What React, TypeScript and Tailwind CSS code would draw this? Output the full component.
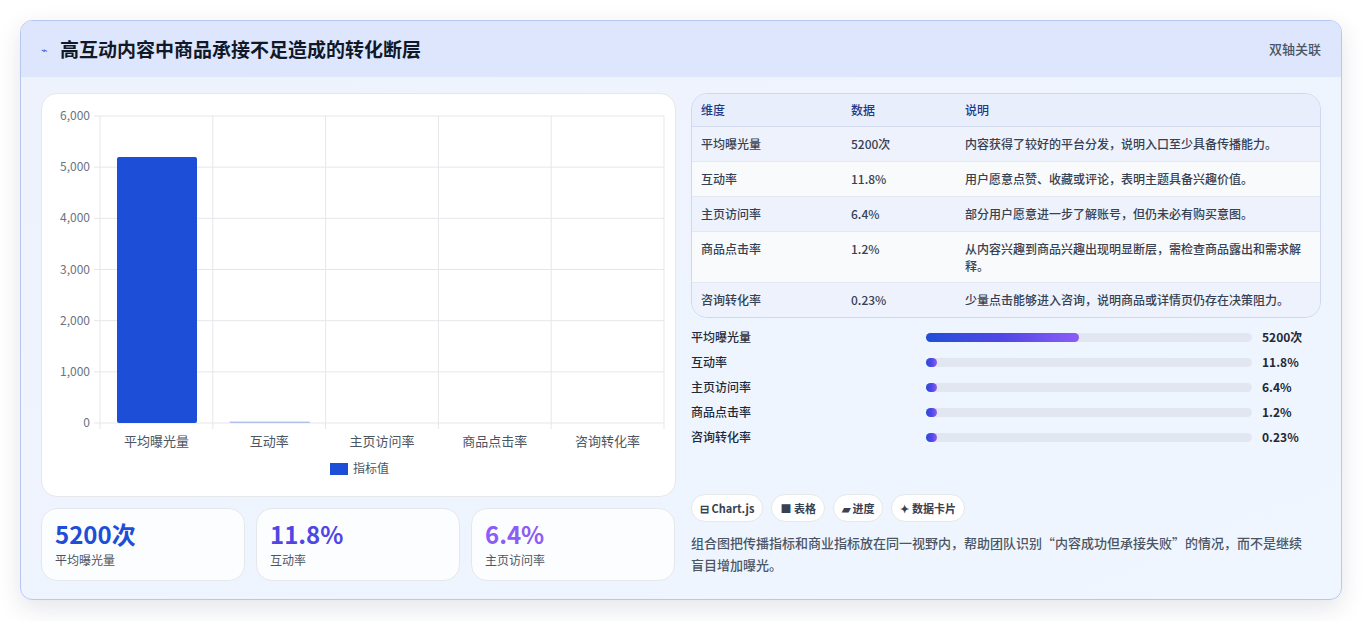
import React from "react";

const rows = [
  ["平均曝光量", "5200次", "内容获得了较好的平台分发，说明入口至少具备传播能力。"],
  ["互动率", "11.8%", "用户愿意点赞、收藏或评论，表明主题具备兴趣价值。"],
  ["主页访问率", "6.4%", "部分用户愿意进一步了解账号，但仍未必有购买意图。"],
  ["商品点击率", "1.2%", "从内容兴趣到商品兴趣出现明显断层，需检查商品露出和需求解释。"],
  ["咨询转化率", "0.23%", "少量点击能够进入咨询，说明商品或详情页仍存在决策阻力。"],
];
const bars: [string, string, number][] = [
  ["平均曝光量", "5200次", 47],
  ["互动率", "11.8%", 3.5],
  ["主页访问率", "6.4%", 3.5],
  ["商品点击率", "1.2%", 3.5],
  ["咨询转化率", "0.23%", 3.5],
];

function Chart() {
  const x0 = 58, x1 = 622, y0 = 22, y1 = 329;
  const cw = (x1 - x0) / 5;
  const cats = ["平均曝光量", "互动率", "主页访问率", "商品点击率", "咨询转化率"];
  return (
    <svg width="635" height="403" className="block">
      {[0, 1, 2, 3, 4, 5, 6].map((i) => {
        const y = y1 - (i * (y1 - y0)) / 6;
        return (
          <g key={i}>
            <line x1={x0 - 6} x2={x1} y1={y} y2={y} stroke="#e5e7eb" />
            <text x={x0 - 10} y={y + 4} textAnchor="end" fontSize="12" fill="#6b7280">
              {i === 0 ? "0" : `${i},000`}
            </text>
          </g>
        );
      })}
      {[0, 1, 2, 3, 4, 5].map((i) => (
        <line key={i} x1={x0 + i * cw} x2={x0 + i * cw} y1={y0} y2={y1 + 6} stroke="#e5e7eb" />
      ))}
      <rect x={x0 + 17} y={y1 - 5200 * (y1 - y0) / 6000} width={80} height={5200 * (y1 - y0) / 6000} fill="#1d4ed8" rx="2" />
      <rect x={x0 + cw + 17} y={y1 - 1.5} width={80} height={1.5} fill="#1d4ed8" opacity="0.3" />
      {cats.map((c, i) => (
        <text key={c} x={x0 + cw * i + cw / 2} y={y1 + 23} textAnchor="middle" fontSize="13" fill="#4b5563">{c}</text>
      ))}
      <rect x={288} y={369} width={18} height={12} fill="#1d4ed8" />
      <text x={311} y={379} fontSize="12" fill="#4b5563">指标值</text>
    </svg>
  );
}

export default function App() {
  return (
    <div className="min-h-[621px] bg-white pt-5 px-5" style={{ fontFamily: '"Noto Sans CJK SC", "Noto Sans", sans-serif' }}>
      <div className="w-[1322px] h-[580px] rounded-xl border border-[#b9c6ee] overflow-hidden shadow-[0_8px_24px_rgba(30,41,80,0.12)] bg-gradient-to-br from-[#eef2fd] to-[#eff6ff]">
        <div className="h-[56px] bg-[#dde6fd] flex items-center justify-between px-5">
          <div className="flex items-center gap-3">
            <span className="text-[#3b5bdb] text-[11px]">⌁</span>
            <span className="text-[19px] font-bold text-[#111827]">高互动内容中商品承接不足造成的转化断层</span>
          </div>
          <span className="text-[13px] text-[#4b5563] font-medium">双轴关联</span>
        </div>
        <div className="flex gap-[15px] px-5 pt-[16px]">
          <div className="w-[635px] flex flex-col gap-[11px]">
            <div className="h-[404px] bg-white rounded-2xl border border-[#e5e7eb]">
              <Chart />
            </div>
            <div className="flex gap-[11px]">
              {[["5200次", "平均曝光量", "text-[#1d4ed8]"], ["11.8%", "互动率", "text-[#4f46e5]"], ["6.4%", "主页访问率", "text-[#8b5cf6]"]].map(([v, l, c]) => (
                <div key={l} className="w-[204px] h-[73px] bg-white/80 rounded-2xl border border-[#e5e7eb] px-[13px] pt-[8px]">
                  <div className={`text-[24px] font-bold leading-[34px] ${c}`}>{v}</div>
                  <div className="text-[12px] text-[#4b5563]">{l}</div>
                </div>
              ))}
            </div>
          </div>
          <div className="w-[633px] flex flex-col">
            <div className="rounded-2xl border border-[#cfd8ef] overflow-hidden text-[12px] text-[#374151] font-medium">
              <div className="flex h-[33px] items-center bg-[#e8eefc] text-[#1e3a8a] border-b border-[#d4dcef]">
                <div className="w-[159px] pl-[9px]">维度</div>
                <div className="w-[114px]">数据</div>
                <div className="flex-1">说明</div>
              </div>
              {rows.map((r, i) => (
                <div key={r[0]} className={`flex py-[8px] border-b last:border-b-0 border-[#e3e8f3] ${i % 2 === 0 ? "bg-[#eef2fd]" : "bg-[#f8fafc]"}`}>
                  <div className="w-[159px] pl-[9px]">{r[0]}</div>
                  <div className="w-[114px]">{r[1]}</div>
                  <div className="flex-1 pr-4 leading-[17px]">{r[2]}</div>
                </div>
              ))}
            </div>
            <div className="mt-[10px] flex flex-col gap-[7px]">
              {bars.map(([l, v, w]) => (
                <div key={l} className="flex items-center h-[18px] text-[12px]">
                  <div className="w-[235px] text-[#1f2937] font-medium">{l}</div>
                  <div className="w-[326px] h-[9px] bg-[#e2e6f0] rounded-full">
                    <div className="h-full rounded-full bg-gradient-to-r from-[#1d4ed8] via-[#4f46e5] to-[#8b5cf6]" style={{ width: `${w}%` }} />
                  </div>
                  <div className="ml-[10px] font-bold text-[#1f2937]">{v}</div>
                </div>
              ))}
            </div>
            <div className="mt-[48px] flex gap-[8px]">
              {["⊟ Chart.js", "■ 表格", "▰ 进度", "✦ 数据卡片"].map((c) => (
                <span key={c} className="h-[28px] px-[8px] flex items-center rounded-full bg-white border border-[#e5e7eb] text-[11px] font-semibold text-[#374151]">{c}</span>
              ))}
            </div>
            <p className="mt-[10px] pr-[10px] text-[13px] leading-[22px] text-[#4b5563] font-medium">
              组合图把传播指标和商业指标放在同一视野内，帮助团队识别“内容成功但承接失败”的情况，而不是继续盲目增加曝光。
            </p>
          </div>
        </div>
      </div>
    </div>
  );
}
